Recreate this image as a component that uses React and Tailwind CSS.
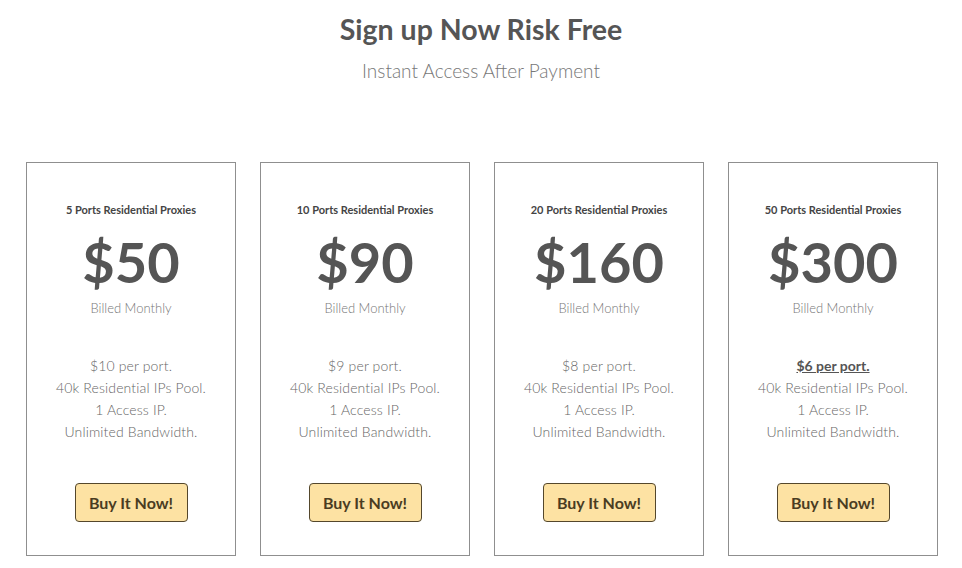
import React from 'react';

const plans = [
  { title: '5 Ports Residential Proxies', price: '$50', perPort: '$10 per port.' },
  { title: '10 Ports Residential Proxies', price: '$90', perPort: '$9 per port.' },
  { title: '20 Ports Residential Proxies', price: '$160', perPort: '$8 per port.' },
  { title: '50 Ports Residential Proxies', price: '$300', perPort: '$6 per port.', best: true },
];

const PlanCard = ({ plan }) => (
  <div className="w-[210px] h-[394px] border border-[#8f8f8f] flex flex-col items-center bg-white">
    <h3 className="mt-[40px] text-[11px] leading-[14px] font-bold text-[#444]">{plan.title}</h3>
    <div className="mt-[11px] text-[56px] leading-[68px] font-bold text-[#555]">{plan.price}</div>
    <p className="mt-[4px] text-[13px] leading-[16px] font-light text-[#777]">Billed Monthly</p>
    <ul className="mt-[39px] text-[14px] leading-[22px] tracking-[0.15px] font-light text-[#666] text-center">
      <li className={plan.best ? 'font-bold underline text-[#555] tracking-normal' : ''}>{plan.perPort}</li>
      <li>40k Residential IPs Pool.</li>
      <li>1 Access IP.</li>
      <li>Unlimited Bandwidth.</li>
    </ul>
    <button className="mt-[40px] w-[113px] h-[39px] rounded-[4px] border border-[#54472c] bg-[#fde2a3] text-[16px] font-bold text-[#4a3c22]">
      Buy It Now!
    </button>
  </div>
);

export default function App() {
  return (
    <div className="w-[962px] h-[568px] bg-white font-['Lato',sans-serif]">
      <header className="pt-[11px] text-center">
        <h1 className="text-[28.5px] leading-[36px] font-bold text-[#555]">Sign up Now Risk Free</h1>
        <p className="mt-[13px] text-[19px] leading-[22px] font-light text-[#777]">Instant Access After Payment</p>
      </header>
      <div className="mt-[80px] pl-[26px] flex gap-[24px]">
        {plans.map((plan) => (
          <PlanCard key={plan.title} plan={plan} />
        ))}
      </div>
    </div>
  );
}
